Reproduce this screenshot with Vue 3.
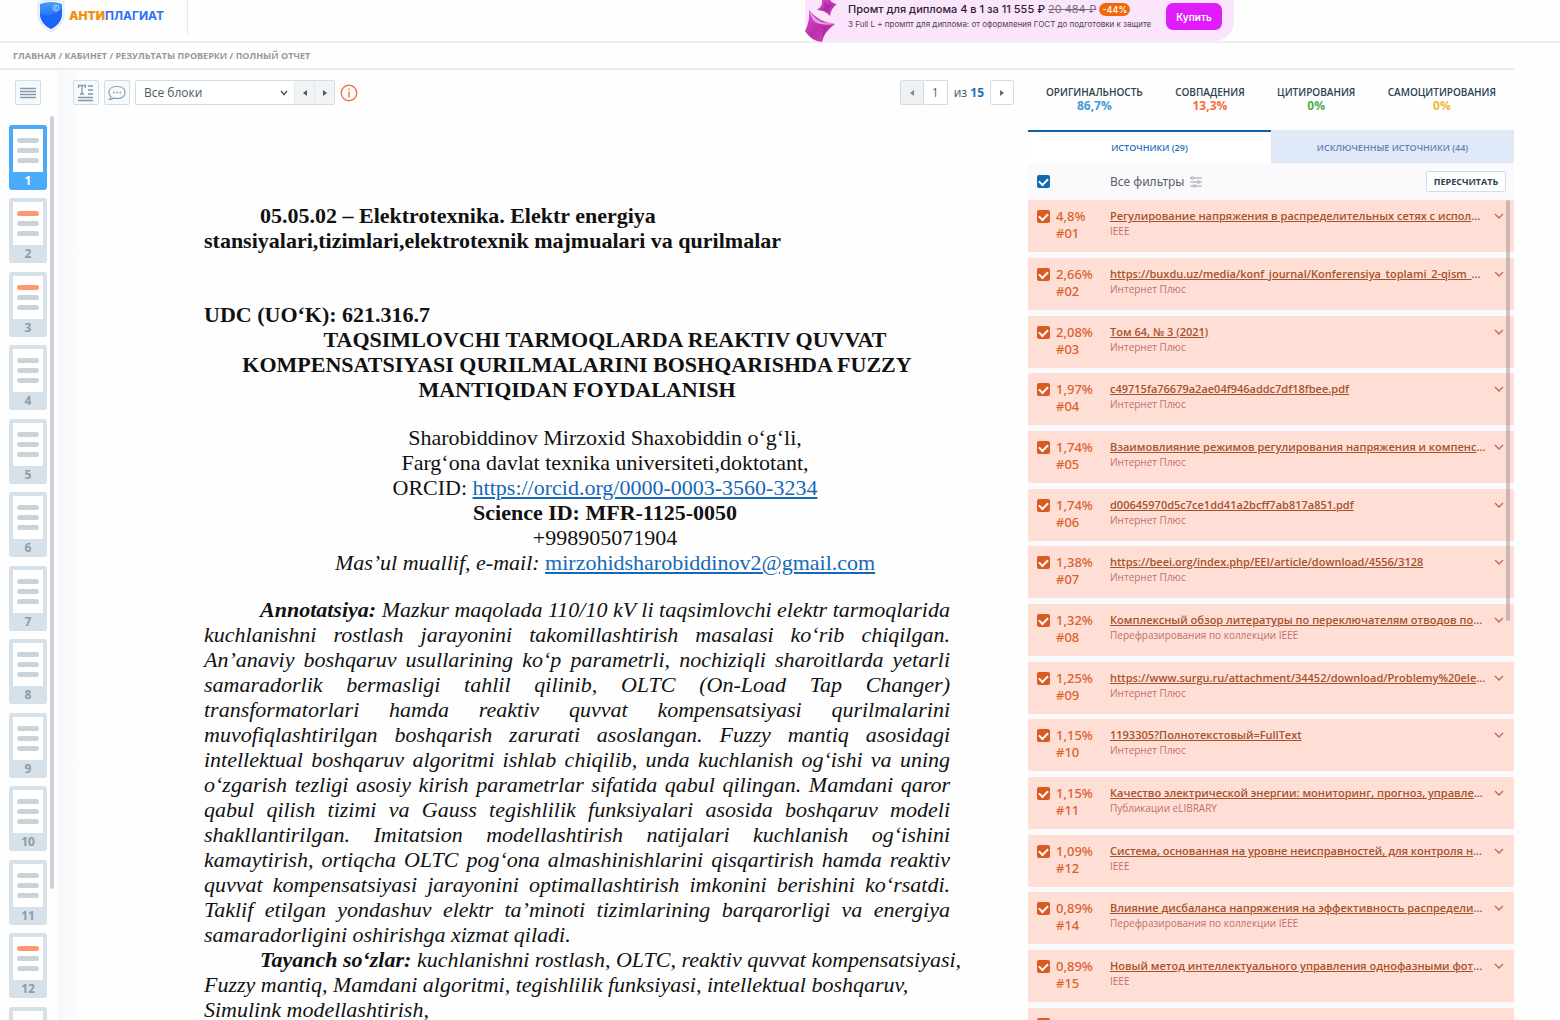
<template>
  <div class="page">
    <!-- Header -->
    <header class="header">
      <a href="#" class="logo">
        <svg width="28" height="34" viewBox="0 0 28 34">
          <defs>
            <linearGradient id="shield" x1="0" y1="0" x2="0" y2="1">
              <stop offset="0" stop-color="#3f9cfb" />
              <stop offset="1" stop-color="#1257ea" />
            </linearGradient>
          </defs>
          <path d="M1 3Q14-1 27 3V17Q26 26 14 33Q2 26 1 17Z" fill="#eef4fa" stroke="#d9e5ef" />
          <path d="M3 5Q14 1 25 5V16Q24 25 14 30Q4 25 3 16Z" fill="url(#shield)" />
          <path d="M3 15Q17 19 25 9V16Q24 25 14 30Q4 25 3 16Z" fill="#1b66fa" />
          <circle cx="19" cy="9" r="3" fill="none" stroke="#a9d2ff" />
          <path d="M20 8Q18 7 18 9Q18 11 20 10" fill="none" stroke="#a9d2ff" />
        </svg>
        <span class="logo-text"><b>АНТИ</b>ПЛАГИАТ</span>
      </a>
      <div class="promo">
        <svg width="34" height="42" viewBox="0 0 34 42">
          <defs>
            <linearGradient id="gem" x1="0" y1="0" x2="1" y2="1">
              <stop offset="0" stop-color="#e24fd0" />
              <stop offset="0.5" stop-color="#bb2fac" />
              <stop offset="1" stop-color="#d946c8" />
            </linearGradient>
          </defs>
          <path d="M17 0Q18 6 12 10Q20 10 25 16Q26 8 32 4Q28 4 25 0Z" fill="url(#gem)" />
          <path d="M18 1Q21 5 18 9L24 13Q23 8 27 5Q22 4 18 1Z" fill="#8e2387" opacity="0.4" />
          <path d="M4 10Q5 22 0 31Q6 41 17 42Q19 32 30 24Q13 22 4 10Z" fill="url(#gem)" />
          <path d="M4 10Q9 19 17 22L30 24Q17 26 10 22Q6 18 4 10Z" fill="#f9c7f0" opacity="0.7" />
          <path d="M17 27L27 25Q19 31 17 41Q18 32 17 27Z" fill="#8e2387" opacity="0.4" />
        </svg>
        <div class="promo-text">
          <p class="promo-title">
            Промт для диплома 4 в 1 за 11 555 ₽ <s>20 484 ₽</s> <span class="discount">-44%</span>
          </p>
          <p class="promo-sub">3 Full L + промпт для диплома: от оформления ГОСТ до подготовки к защите</p>
        </div>
        <button class="buy">Купить</button>
      </div>
    </header>

    <nav class="breadcrumbs">
      <a href="#">Главная</a> / <a href="#">Кабинет</a> / <a href="#">Результаты проверки</a> / <span>Полный отчет</span>
    </nav>

    <div class="workspace">
      <!-- Page thumbnails -->
      <aside class="sidebar">
        <button class="tool menu" aria-label="Меню">
          <svg width="18" height="12" viewBox="0 0 18 12" stroke="#8597a8" stroke-width="1.3">
            <path d="M1 1.5H17M1 4.5H17M1 7.5H17M1 10.5H17" />
          </svg>
        </button>
        <div class="thumbs">
          <button
            v-for="n in 13"
            :key="n"
            class="thumb"
            :class="{ active: n === currentPage, marked: markedPages.includes(n) }"
            @click="currentPage = n"
          >
            <span class="sheet"><i></i><i></i><i></i></span>
            <span class="thumb-num">{{ n < 13 ? n : '' }}</span>
          </button>
        </div>
        <div class="scroll-thumb left-scroll"></div>
      </aside>

      <!-- Document -->
      <main class="viewer">
        <div class="toolbar">
          <button class="tool" aria-label="Текст">
            <svg width="18" height="18" viewBox="0 0 18 18" fill="none" stroke="#8597a8" stroke-width="1.3">
              <path d="M1.5 4V1.5H8.5V4M5 1.5V10M3 10H7M11 2H16M11 6H16M11 10H16M1 13.5H16M1 16.5H16" />
            </svg>
          </button>
          <button class="tool" aria-label="Комментарии">
            <svg width="18" height="16" viewBox="0 0 18 16" fill="none" stroke="#8597a8" stroke-width="1.1">
              <path d="M3 11.5Q1 10 1 7.5C1 3.5 4.5 1.5 9 1.5S17 3.5 17 7.5S13.5 13.5 9 13.5Q7 13.5 5.5 13Q4 14.5 1.5 14.5Q3 13.5 3 11.5Z" />
              <path d="M5 7.5H6.5M8.3 7.5H9.8M11.6 7.5H13.1" stroke-width="1.6" />
            </svg>
          </button>
          <div class="block-nav">
            <select v-model="block" class="block-select" aria-label="Блоки">
              <option>Все блоки</option>
            </select>
            <svg class="chevron" width="8" height="6" viewBox="0 0 8 6" fill="none" stroke="#4a5b68" stroke-width="1.5">
              <path d="M1 1L4 4.5L7 1" />
            </svg>
            <button class="arrow" aria-label="Предыдущий блок">
              <svg width="6" height="6" viewBox="0 0 6 6"><path d="M5 0V6L1 3Z" fill="#4a5b68" /></svg>
            </button>
            <button class="arrow" aria-label="Следующий блок">
              <svg width="6" height="6" viewBox="0 0 6 6"><path d="M1 0V6L5 3Z" fill="#4a5b68" /></svg>
            </button>
          </div>
          <button class="info" aria-label="Информация">
            <svg width="18" height="18" viewBox="0 0 18 18" fill="none" stroke="#f4764a" stroke-width="1.5">
              <circle cx="9" cy="9" r="7.7" />
              <path d="M9 7.5V13.5M9 4.5V6" />
            </svg>
          </button>
          <div class="pager">
            <button class="arrow boxed off" aria-label="Предыдущая страница">
              <svg width="6" height="6" viewBox="0 0 6 6"><path d="M5 0V6L1 3Z" fill="#7a8894" /></svg>
            </button>
            <input v-model="currentPage" class="page-input" type="text" aria-label="Страница" />
            <span class="of">из <b>15</b></span>
            <button class="arrow boxed" aria-label="Следующая страница">
              <svg width="6" height="6" viewBox="0 0 6 6"><path d="M1 0V6L5 3Z" fill="#5c6b78" /></svg>
            </button>
          </div>
        </div>

        <article class="document">
          <p class="doc-code">
            <span class="indent">05.05.02 – Elektrotexnika. Elektr energiya</span><br />
            stansiyalari,tizimlari,elektrotexnik majmualari va qurilmalar
          </p>
          <p class="udc">UDC (UO‘K): 621.316.7</p>
          <h1>
            <span class="indent">TAQSIMLOVCHI TARMOQLARDA REAKTIV QUVVAT</span><br />
            KOMPENSATSIYASI QURILMALARINI BOSHQARISHDA FUZZY<br />
            MANTIQIDAN FOYDALANISH
          </h1>
          <div class="authors">
            <p>Sharobiddinov Mirzoxid Shaxobiddin o‘g‘li,</p>
            <p>Farg‘ona davlat texnika universiteti,doktotant,</p>
            <p>ORCID: <a href="#">https://orcid.org/0000-0003-3560-3234</a></p>
            <p><b>Science ID: MFR-1125-0050</b></p>
            <p>+998905071904</p>
            <p><em>Mas’ul muallif, e-mail:</em> <a href="#">mirzohidsharobiddinov2@gmail.com</a></p>
          </div>
          <div class="abstract">
            <p class="line indent"><b>Annotatsiya:</b> Mazkur maqolada 110/10 kV li taqsimlovchi elektr tarmoqlarida</p>
            <p v-for="line in abstractLines" :key="line" class="line">{{ line }}</p>
            <p>samaradorligini oshirishga xizmat qiladi.</p>
            <p class="indent"><b>Tayanch so‘zlar:</b> kuchlanishni rostlash, OLTC, reaktiv quvvat kompensatsiyasi,</p>
            <p>Fuzzy mantiq, Mamdani algoritmi, tegishlilik funksiyasi, intellektual boshqaruv,</p>
            <p>Simulink modellashtirish,</p>
          </div>
        </article>
      </main>

      <!-- Sources -->
      <section class="panel">
        <dl class="stats">
          <div v-for="s in stats" :key="s.label">
            <dt>{{ s.label }}</dt>
            <dd :class="s.kind">{{ s.value }}</dd>
          </div>
        </dl>
        <div class="tabs">
          <button class="tab current">Источники (29)</button>
          <button class="tab">Исключенные источники (44)</button>
        </div>
        <div class="filters">
          <input v-model="allChecked" type="checkbox" class="check blue" aria-label="Выбрать все" />
          <button class="filter-btn">
            Все фильтры
            <svg width="12" height="12" viewBox="0 0 12 12" fill="none" stroke="#98a3ad" stroke-width="1">
              <path d="M0 2H1M4 2H12M0 6H7M10 6H12M0 10H3M6 10H12" />
              <circle cx="2.5" cy="2" r="1.3" />
              <circle cx="8.5" cy="6" r="1.3" />
              <circle cx="4.5" cy="10" r="1.3" />
            </svg>
          </button>
          <button class="recount">Пересчитать</button>
        </div>
        <div class="source-wrap">
          <ul class="sources">
            <li v-for="s in sources" :key="s.id" class="source">
              <input :id="'src' + s.id" v-model="s.checked" type="checkbox" class="check" />
              <label :for="'src' + s.id" class="percent">{{ s.percent }}<br />#{{ s.id }}</label>
              <div class="source-info">
                <div class="source-title"><a href="#">{{ s.title }}</a>{{ s.cut ? '...' : '' }}</div>
                <div class="source-type">{{ s.type }}</div>
              </div>
              <button class="expand" aria-label="Подробнее">
                <svg width="10" height="7" viewBox="0 0 10 7" fill="none" stroke="#c26a5c" stroke-width="1.4">
                  <path d="M1 1L5 5L9 1" />
                </svg>
              </button>
            </li>
            <li class="source">
              <input v-model="nextChecked" type="checkbox" class="check" aria-label="Источник" />
            </li>
          </ul>
          <div class="scroll-thumb right-scroll"></div>
        </div>
      </section>
    </div>
  </div>
</template>

<script setup>
import { ref } from 'vue'

const currentPage = ref(1)
const block = ref('Все блоки')
const allChecked = ref(true)
const nextChecked = ref(true)
const markedPages = [2, 3, 12, 13]

const stats = [
  { label: 'Оригинальность', value: '86,7%', kind: 'original' },
  { label: 'Совпадения', value: '13,3%', kind: 'match' },
  { label: 'Цитирования', value: '0%', kind: 'cite' },
  { label: 'Самоцитирования', value: '0%', kind: 'self' },
]

const abstractLines = [
  'kuchlanishni rostlash jarayonini takomillashtirish masalasi ko‘rib chiqilgan.',
  'An’anaviy boshqaruv usullarining ko‘p parametrli, nochiziqli sharoitlarda yetarli',
  'samaradorlik bermasligi tahlil qilinib, OLTC (On-Load Tap Changer)',
  'transformatorlari hamda reaktiv quvvat kompensatsiyasi qurilmalarini',
  'muvofiqlashtirilgan boshqarish zarurati asoslangan. Fuzzy mantiq asosidagi',
  'intellektual boshqaruv algoritmi ishlab chiqilib, unda kuchlanish og‘ishi va uning',
  'o‘zgarish tezligi asosiy kirish parametrlar sifatida qabul qilingan. Mamdani qaror',
  'qabul qilish tizimi va Gauss tegishlilik funksiyalari asosida boshqaruv modeli',
  'shakllantirilgan. Imitatsion modellashtirish natijalari kuchlanish og‘ishini',
  'kamaytirish, ortiqcha OLTC pog‘ona almashinishlarini qisqartirish hamda reaktiv',
  'quvvat kompensatsiyasi jarayonini optimallashtirish imkonini berishini ko‘rsatdi.',
  'Taklif etilgan yondashuv elektr ta’minoti tizimlarining barqarorligi va energiya',
]

const web = 'Интернет Плюс'
const para = 'Перефразирования по коллекции IEEE'

const sources = ref([
  { id: '01', percent: '4,8%', title: 'Регулирование напряжения в распределительных сетях с испол', cut: true, type: 'IEEE', checked: true },
  { id: '02', percent: '2,66%', title: 'https://buxdu.uz/media/konf_journal/Konferensiya_toplami_2-qism_', cut: true, type: web, checked: true },
  { id: '03', percent: '2,08%', title: 'Том 64, № 3 (2021)', type: web, checked: true },
  { id: '04', percent: '1,97%', title: 'c49715fa76679a2ae04f946addc7df18fbee.pdf', type: web, checked: true },
  { id: '05', percent: '1,74%', title: 'Взаимовлияние режимов регулирования напряжения и компенс', cut: true, type: web, checked: true },
  { id: '06', percent: '1,74%', title: 'd00645970d5c7ce1dd41a2bcff7ab817a851.pdf', type: web, checked: true },
  { id: '07', percent: '1,38%', title: 'https://beei.org/index.php/EEI/article/download/4556/3128', type: web, checked: true },
  { id: '08', percent: '1,32%', title: 'Комплексный обзор литературы по переключателям отводов по', cut: true, type: para, checked: true },
  { id: '09', percent: '1,25%', title: 'https://www.surgu.ru/attachment/34452/download/Problemy%20ele', cut: true, type: web, checked: true },
  { id: '10', percent: '1,15%', title: '1193305?Полнотекстовый=FullText', type: web, checked: true },
  { id: '11', percent: '1,15%', title: 'Качество электрической энергии: мониторинг, прогноз, управле', cut: true, type: 'Публикации eLIBRARY', checked: true },
  { id: '12', percent: '1,09%', title: 'Система, основанная на уровне неисправностей, для контроля н', cut: true, type: 'IEEE', checked: true },
  { id: '14', percent: '0,89%', title: 'Влияние дисбаланса напряжения на эффективность распредели', cut: true, type: para, checked: true },
  { id: '15', percent: '0,89%', title: 'Новый метод интеллектуального управления однофазными фот', cut: true, type: 'IEEE', checked: true },
])
</script>

<style>
body {
  margin: 0;
  background: #fefefe;
}
</style>

<style scoped>
* {
  box-sizing: border-box;
}

p, h1, dl, dd, ul {
  margin: 0;
  padding: 0;
}

button {
  font-family: inherit;
  padding: 0;
  border: none;
  background: none;
  cursor: pointer;
}

svg {
  display: block;
  flex: none;
}

.page {
  height: 100vh;
  overflow: hidden;
  display: flex;
  flex-direction: column;
  font-family: 'Open Sans', 'Noto Sans', sans-serif;
  color: #44545f;
}

.header {
  flex: none;
  height: 43px;
  display: flex;
  justify-content: space-between;
  padding-right: 326px;
  border-bottom: 2px solid #efefef;
}

.logo {
  display: flex;
  align-items: center;
  gap: 4px;
  width: 188px;
  height: 35px;
  padding: 0 0 3px 37px;
  border-right: 1px solid #e8e8e8;
  text-decoration: none;
}

.logo-text {
  font: 700 12px/20px Inter, sans-serif;
  color: #2f70f5;
}

.logo-text b {
  color: #f0910f;
}

.promo {
  display: flex;
  gap: 9px;
  width: 429px;
  height: 41px;
  padding-right: 12px;
  background: #fbe5fd;
  border-radius: 0 0 20px 20px;
  font-family: Inter, sans-serif;
}

.promo-text {
  flex: 1;
  white-space: nowrap;
}

.promo-title {
  font-size: 11px;
  font-weight: 500;
  line-height: 18px;
  color: #2c2530;
}

.promo-title s {
  font-weight: 400;
  color: #77707c;
}

.discount {
  padding: 0 3px;
  border-radius: 7px;
  background: #ee6a09;
  color: #fff;
  font-size: 9px;
  line-height: 13px;
  display: inline-block;
}

.promo-sub {
  font-size: 8px;
  line-height: 13px;
  color: #4c4450;
}

.buy {
  width: 56px;
  height: 27px;
  margin-top: 3px;
  border-radius: 7px;
  background: #e01cfb;
  color: #fff;
  font-size: 10px;
  font-weight: 600;
}

.breadcrumbs {
  flex: none;
  height: 27px;
  margin-right: 46px;
  padding-left: 13px;
  border-bottom: 2px solid #ebebeb;
  font-size: 9px;
  font-weight: 700;
  line-height: 25px;
  text-transform: uppercase;
  color: #98989a;
}

.breadcrumbs a {
  color: inherit;
  text-decoration: none;
}

.workspace {
  flex: 1;
  min-height: 0;
  display: flex;
  padding-right: 46px;
}

.sidebar {
  position: relative;
  flex: none;
  width: 58px;
  padding: 10px 0 0 9px;
}

.tool {
  display: flex;
  align-items: center;
  justify-content: center;
  width: 26px;
  height: 25px;
  border: 1px solid #cfe0e5;
  border-radius: 2px;
  background: #f7fafc;
}

.menu {
  margin: 0 0 20px 6px;
}

.thumb {
  display: block;
  width: 38px;
  height: 65px;
  margin-bottom: 8px;
  padding: 4px;
  border-radius: 3px;
  background: #d6e1e9;
  color: #8c9ca8;
}

.thumb:nth-child(2n) {
  margin-bottom: 9px;
}

.thumb.active {
  background: #4aabfb;
  color: #fff;
}

.sheet {
  display: flex;
  flex-direction: column;
  align-items: center;
  gap: 5px;
  height: 43px;
  padding-top: 9px;
  background: #fff;
}

.sheet i {
  width: 22px;
  height: 5px;
  border-radius: 3px;
  background: #cbd5d9;
}

.marked .sheet i:first-child {
  background: #fd996f;
}

.thumb-num {
  display: block;
  height: 18px;
  font-size: 12px;
  font-weight: 700;
  line-height: 18px;
}

.scroll-thumb {
  position: absolute;
  width: 4px;
  border-radius: 2px;
  background: #cdd2d7;
}

.left-scroll {
  top: 46px;
  right: 4px;
  height: 773px;
}

.viewer {
  flex: 1;
  min-width: 0;
  padding: 10px 14px 0 15px;
  background: linear-gradient(90deg, #f5f7fb, #fefefe 24px);
}

.toolbar {
  display: flex;
  align-items: center;
  gap: 5px;
}

.block-nav {
  position: relative;
  display: flex;
  width: 200px;
  height: 25px;
  border: 1px solid #cfe0e5;
  border-radius: 2px;
  background: #fff;
}

.block-select {
  flex: 1;
  appearance: none;
  padding: 0 8px;
  border: none;
  background: transparent;
  font: 12px/20px 'Open Sans', sans-serif;
  color: #4b5761;
}

.chevron {
  position: absolute;
  top: 9px;
  right: 46px;
}

.arrow {
  display: flex;
  align-items: center;
  justify-content: center;
  width: 20px;
  background: #f1f3f5;
  border-left: 1px solid #e2eaee;
}

.pager {
  display: flex;
  align-items: center;
  margin-left: auto;
}

.boxed {
  width: 24px;
  height: 25px;
  border: 1px solid #cfe0e5;
  border-radius: 2px;
  background: #fff;
}

.boxed.off {
  background: #eef0f2;
}

.page-input {
  width: 24px;
  height: 25px;
  padding: 0;
  border: 1px solid #cfe0e5;
  border-left: none;
  background: #fff;
  font: 12px/20px 'Open Sans', sans-serif;
  color: #5b6670;
  text-align: center;
}

.of {
  margin: 0 6px;
  font-size: 12px;
}

.of b {
  color: #1d6fb8;
}

.document {
  width: 746px;
  margin: 98px 0 0 131px;
  font: 22px/25px 'Liberation Serif', serif;
  color: #111;
  white-space: nowrap;
}

.document a {
  color: #1668b8;
}

.indent {
  padding-left: 56px;
}

.doc-code,
.udc {
  font-weight: 700;
}

.udc {
  margin-top: 49px;
}

h1 {
  font-size: 22px;
  font-weight: 700;
  text-align: center;
}

.authors {
  margin: 23px 0 22px;
  padding-left: 56px;
  text-align: center;
}

.abstract {
  font-style: italic;
}

.line {
  text-align: justify;
  text-align-last: justify;
  white-space: normal;
}

.panel {
  flex: none;
  width: 486px;
  display: flex;
  flex-direction: column;
}

.stats {
  flex: none;
  display: flex;
  justify-content: space-between;
  height: 60px;
  padding: 15px 18px 0;
  text-align: center;
}

.stats dt {
  font-size: 10px;
  font-weight: 600;
  line-height: 14px;
  text-transform: uppercase;
  color: #2c4251;
}

.stats dd {
  font-size: 12px;
  font-weight: 700;
  line-height: 14px;
}

.original { color: #459bd9; }
.match { color: #f76a3f; }
.cite { color: #4caf50; }
.self { color: #f0b733; }

.tabs {
  flex: none;
  display: flex;
  height: 33px;
}

.tab {
  flex: 1;
  border-top: 2px solid #e0e9f8;
  background: #e0e9f8;
  color: #6381b5;
  font-size: 9px;
  font-weight: 600;
  text-transform: uppercase;
}

.tab.current {
  border-top-color: #0d5fae;
  background: #fff;
  color: #1d6fb8;
}

.filters {
  flex: none;
  display: flex;
  align-items: center;
  height: 37px;
  padding: 0 8px 0 9px;
  background: #fafafd;
}

.check {
  appearance: none;
  flex: none;
  display: flex;
  justify-content: center;
  width: 13px;
  height: 13px;
  margin: 2px 0 0;
  border-radius: 2px;
  background: #da5a23;
}

.check.blue {
  margin: 0;
  background: #1467b3;
}

.check:checked::after {
  content: '';
  width: 7px;
  height: 4px;
  margin-top: 3px;
  border: solid #fff;
  border-width: 0 0 2px 2px;
  transform: rotate(-45deg);
}

.filter-btn {
  display: flex;
  align-items: center;
  gap: 6px;
  margin-left: 60px;
  font: 12px/20px 'Noto Sans', sans-serif;
  color: #56616b;
}

.recount {
  width: 80px;
  height: 21px;
  margin-left: auto;
  border: 1px solid #cfdcee;
  border-radius: 2px;
  background: #fff;
  color: #2c4251;
  font-size: 9px;
  font-weight: 700;
  text-transform: uppercase;
}

.source-wrap {
  position: relative;
  flex: 1;
  min-height: 0;
  overflow: hidden;
  background: #fafafd;
}

.sources {
  list-style: none;
}

.source {
  display: flex;
  align-items: flex-start;
  height: 52px;
  margin-bottom: 6px;
  padding: 8px 10px 0 9px;
  background: #ffdfd5;
}

.source:nth-child(3n) {
  margin-bottom: 5px;
}

.percent {
  flex: none;
  width: 54px;
  margin-left: 6px;
  font: 500 13px/17px 'Noto Sans', sans-serif;
  color: #d9622f;
}

.source-info {
  flex: 1;
  min-width: 0;
  white-space: nowrap;
}

.source-title {
  font-size: 11px;
  font-weight: 600;
  line-height: 16px;
  color: #a4532c;
}

.source-title a {
  color: inherit;
}

.source-type {
  font-size: 10px;
  line-height: 15px;
  color: #c26f6b;
}

.expand {
  padding-top: 5px;
}

.right-scroll {
  top: 0;
  right: 4px;
  height: 421px;
  background: rgba(130, 120, 125, 0.4);
}
</style>
